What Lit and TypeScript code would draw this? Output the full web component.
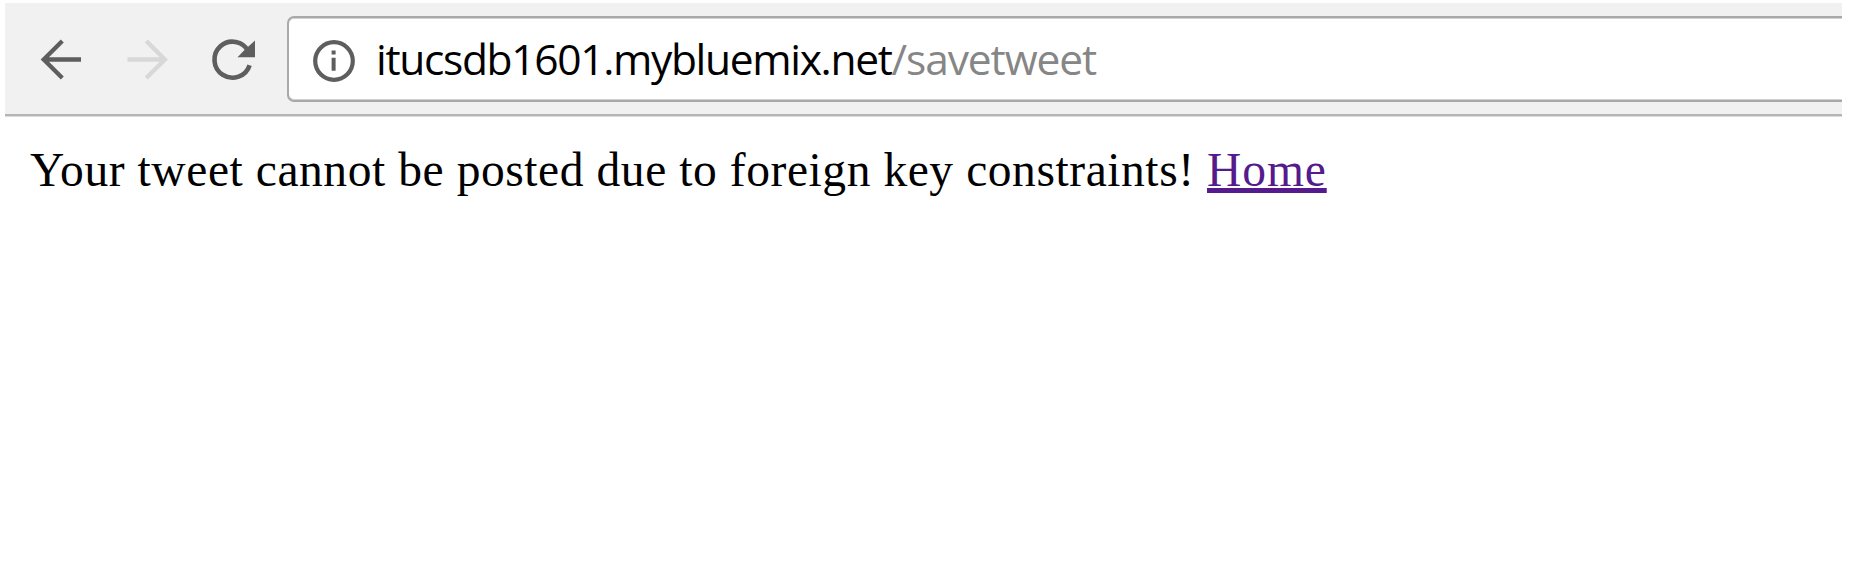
import { LitElement, html, css } from "lit";
import { customElement } from "lit/decorators.js";

@customElement("browser-toolbar")
class BrowserToolbar extends LitElement {
  static styles = css`
    :host { display: block; }
    .bar {
      display: flex;
      height: 111px;
      box-sizing: border-box;
      padding-top: 13px;
      background: #f1f1f1;
    }
    .nav { display: block; width: 282px; height: 87px; flex: none; }
    .address {
      flex: 1;
      height: 86px;
      box-sizing: border-box;
      border: 2px solid #a9a9a9;
      border-right: 0;
      border-radius: 7px 0 0 7px;
      box-shadow: inset 0 1px #d2d2d2, inset 0 -1px #d2d2d2;
      background: #fff;
      display: flex;
      align-items: center;
    }
    .info { display: block; width: 42px; height: 42px; margin: 4px 21px 0 24px; flex: none; }
    .url {
      font: 42.5px/50px "Open Sans", sans-serif;
      color: #000;
      white-space: nowrap;
      letter-spacing: -1.33px;
    }
    .path { color: #868686; letter-spacing: -1.1px; }
    .rule { height: 3px; background: linear-gradient(#b5b5b5 2px, #dcdcdc 2px); }
  `;

  render() {
    return html`
      <div class="bar">
        <svg class="nav" viewBox="5 16 282 87" fill="none" stroke-width="4.3">
          <path d="M81 59.5H44M62.3 41 43.7 59.5 62.3 78" stroke="#5e5e5e" />
          <path d="M127.5 59.5H165M146.3 41 164.9 59.5 146.3 78" stroke="#d8d8d8" />
          <path d="M248.5 51.5A18 18 0 1 0 249.6 65.2" stroke="#5e5e5e" stroke-width="4.6" />
          <path d="M255 40.5V57.3H237.5L244 50.5Z" fill="#5e5e5e" />
        </svg>
        <div class="address">
          <svg class="info" viewBox="0 0 42 42">
            <circle cx="21" cy="21" r="18.8" fill="none" stroke="#5e5e5e" stroke-width="4.2" />
            <path d="M18.6 10.6h4v4h-4zM18.6 17.8h4v13h-4z" fill="#5e5e5e" />
          </svg>
          <div class="url">itucsdb1601.mybluemix.net<span class="path">/savetweet</span></div>
        </div>
      </div>
      <div class="rule"></div>
    `;
  }
}

@customElement("app-root")
class AppRoot extends LitElement {
  static styles = css`
    :host {
      display: block;
      height: 587px;
      box-sizing: border-box;
      padding: 3px 7px 0 5px;
      background: #fff;
    }
    .content {
      padding: 25px 0 0 25px;
      font: 47.5px/56px "Liberation Serif", serif;
      color: #000;
      white-space: nowrap;
      letter-spacing: 0.57px;
    }
    .home {
      color: #551a8b;
      letter-spacing: 0.9px;
      text-decoration: underline;
      text-decoration-thickness: 5px;
      text-underline-offset: 2px;
      text-decoration-skip-ink: none;
    }
  `;

  render() {
    return html`
      <browser-toolbar></browser-toolbar>
      <div class="content">Your tweet cannot be posted due to foreign key constraints! <a class="home" href="#">Home</a></div>
    `;
  }
}
